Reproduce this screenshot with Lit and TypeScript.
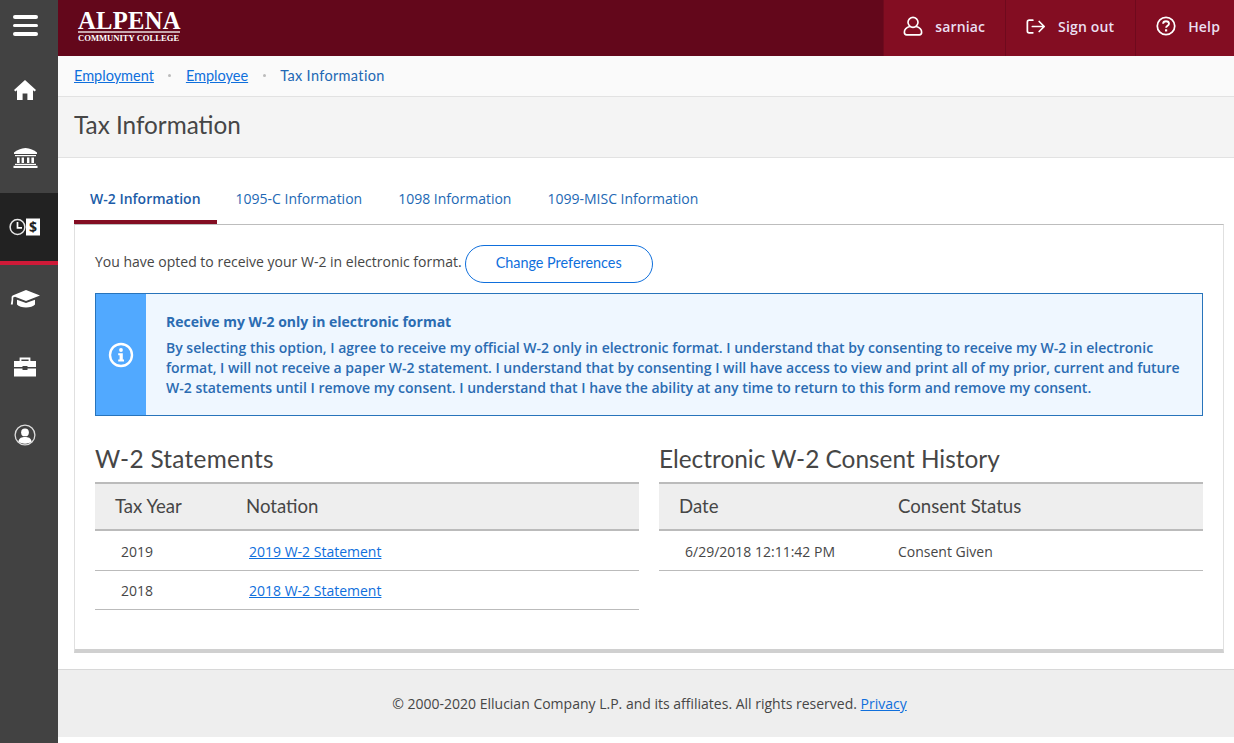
import { LitElement, html, css, svg } from "lit";
import { customElement } from "lit/decorators.js";

const heading = css`"Lato", "Noto Sans", sans-serif`;

const icons = {
  home: svg`<svg viewBox="0 0 22 20" width="22" height="20"><path fill="#fff" d="M11 0 L22 10 L20.6 11.4 L19 10.2 V20 H13.4 V13.5 H8.6 V20 H3 V10.2 L1.4 11.4 L0 10 Z"/></svg>`,
  bank: svg`<svg viewBox="0 0 25 20" width="25" height="20"><path fill="#fff" d="M12.5 0 C17 0.5 21 2 24 4.5 V6 H1 V4.5 C4 2 8 0.5 12.5 0 Z"/><rect fill="#fff" x="2" y="7" width="21" height="1.2"/><path fill="#fff" d="M4 9.5h2.6v5.5H4zM8.6 9.5h2.4v5.5H8.6zM14 9.5h2.4v5.5H14zM18.4 9.5H21v5.5h-2.6z"/><rect fill="#fff" x="2" y="15.8" width="21" height="1.2"/><rect fill="#fff" x="0.5" y="17.8" width="24" height="2.2"/></svg>`,
  pay: svg`<svg viewBox="0 0 32 20" width="32" height="20"><rect fill="#fff" x="17" y="1.5" width="14" height="17"/><circle cx="8.5" cy="10" r="7.4" fill="#222" stroke="#e8e8e8" stroke-width="1.5"/><path d="M8.5 5 V10.8 H13" fill="none" stroke="#fff" stroke-width="1.7"/><text class="dollar" x="24" y="15" text-anchor="middle">$</text></svg>`,
  cap: svg`<svg viewBox="0 0 30 20" width="30" height="20"><path fill="#fff" d="M16 1 L30 6.5 L16 12 L5 7.8 L3.2 8.5 V11 L2.8 15.5 H0.8 L1.6 10.8 V7.8 L2.6 6.6 Z"/><path fill="#fff" d="M7 10.8 L16 14 L25 10.8 V15.5 C22 19.5 10 19.5 7 15.5 Z"/></svg>`,
  case: svg`<svg viewBox="0 0 24 20" width="24" height="20"><path fill="none" stroke="#fff" stroke-width="1.8" d="M7.5 4.5 V1.5 H16.5 V4.5"/><path fill="#fff" d="M1 4 H23 V10 H14.5 V9 H9.5 V10 H1 Z"/><path fill="#fff" d="M1 11.5 H9.5 V13 H14.5 V11.5 H23 V19.5 H1 Z"/></svg>`,
  user: svg`<svg viewBox="0 0 22 22" width="22" height="22"><circle cx="11" cy="11" r="9.9" fill="none" stroke="#ddd" stroke-width="1.3"/><circle cx="11" cy="8.4" r="3.9" fill="#fff"/><path fill="#fff" d="M4.4 17.6 C5 13.8 8 13 11 13 S17 13.8 17.6 17.6 C15 20.4 7 20.4 4.4 17.6 Z"/></svg>`,
  person: svg`<svg viewBox="0 0 22 22" width="20" height="20" fill="none" stroke="#fff" stroke-width="1.8"><circle cx="11" cy="7" r="5.5"/><path d="M7.5 11.5 C3.5 12.5 1.5 15 1.5 18 C1.5 20 2.5 20.8 4 20.8 H18 C19.5 20.8 20.5 20 20.5 18 C20.5 15 18.5 12.5 14.5 11.5"/></svg>`,
  signout: svg`<svg viewBox="0 0 22 18" width="20" height="17" fill="none" stroke="#fff" stroke-width="1.9" stroke-linecap="round" stroke-linejoin="round"><path d="M7.5 2 H3.5 C2.3 2 1.5 2.8 1.5 4 V14 C1.5 15.2 2.3 16 3.5 16 H7.5"/><path d="M7 9 H20 M14.5 3.5 L20 9 L14.5 14.5"/></svg>`,
  help: svg`<svg viewBox="0 0 22 22" width="20" height="20"><circle cx="11" cy="11" r="9.6" fill="none" stroke="#fff" stroke-width="1.9"/><path d="M7.8 8.6 C7.8 6.6 9.4 5.8 11 5.8 C12.8 5.8 14.3 6.8 14.3 8.5 C14.3 10.7 11.1 10.8 11.1 13" fill="none" stroke="#fff" stroke-width="2"/><rect x="9.9" y="14.6" width="2.4" height="2.4" fill="#fff"/></svg>`,
  info: svg`<svg viewBox="0 0 26 26" width="26" height="26"><circle cx="13" cy="13" r="11" fill="none" stroke="#fff" stroke-width="2.4"/><circle cx="13" cy="8" r="1.9" fill="#fff"/><path fill="#fff" d="M10.2 11.2 H14.8 V17.4 H16 V19.4 H10.2 V17.4 H11.6 V13.2 H10.2 Z"/></svg>`,
};

@customElement("app-root")
export class AppRoot extends LitElement {
  static styles = css`
    :host { display: block; font-family: "Open Sans", "Noto Sans", sans-serif; font-size: 14px; color: #464646; background: #fff; }
    * { box-sizing: border-box; }
    a { color: #0f6fdc; }
    .app { display: flex; min-height: 743px; }

    .side { width: 58px; flex: none; background: #424242; display: flex; flex-direction: column; }
    .side-item { display: flex; align-items: center; justify-content: center; height: 68px; padding-right: 8px; }
    .side-item.tall { height: 69px; padding-bottom: 2px; }
    .burger { height: 56px; flex-direction: column; gap: 5px; padding-bottom: 5px; }
    .burger i { display: block; width: 25px; height: 3.5px; border-radius: 2px; background: #fff; }
    .side-item.active { background: #222; height: 72px; border-bottom: 4px solid #cf1a38; }
    .dollar { font: 700 14px "Open Sans", sans-serif; fill: #222; }

    .main { flex: 1; min-width: 0; display: flex; flex-direction: column; }
    .top { height: 56px; background: #63071b; display: flex; align-items: stretch; justify-content: space-between; }
    .logo { padding: 11px 0 0 20px; font-family: "Liberation Serif", serif; color: #fff; font-weight: 700; width: 122px; }
    .logo-main { width: 102px; font-size: 24.6px; line-height: 20px; letter-spacing: 0.3px; border-bottom: 2px solid #c9a8ae; white-space: nowrap; height: 22px; }
    .logo-sub { font-size: 8.6px; line-height: 10px; margin-top: 0; white-space: nowrap; }
    .top-links { display: flex; }
    .top-link { display: flex; align-items: center; gap: 12px; background: #830d22; border-left: 1px solid #6f0a1d; color: #eadff0; font-weight: 600; font-size: 14px; letter-spacing: 0.15px; padding: 0 20px 4px 20px; }
    .top-link svg { display: block; }
    .top-link:nth-child(1) { padding-left: 19px; }
    .top-link:nth-child(2) { padding-right: 21px; }
    .top-link:nth-child(3) { padding-right: 14px; }

    .crumbs { height: 41px; border-bottom: 1px solid #e2e2e2; background: #fafafa; display: flex; align-items: center; padding: 0 16px 2px; font: 400 14.5px ${heading}; }
    .crumbs .sep { width: 3px; height: 3px; border-radius: 50%; background: #bbb; margin: 0 14.5px; }
    .crumbs .cur { color: #2268b4; letter-spacing: 0.35px; }
    .title { height: 61px; background: #f4f4f4; border-bottom: 1px solid #e2e2e2; display: flex; align-items: center; padding: 0 16px 5px; }
    .title h1 { margin: 0; font: 400 24.3px ${heading}; color: #464646; }

    .content { padding: 22px 10px 0 16px; }
    .tabs { display: flex; }
    .tab { height: 44px; padding: 0 16px 3px; display: flex; align-items: center; margin-right: 4px; color: #2268b4; font-size: 14px; white-space: nowrap; border-bottom: 4px solid transparent; }
    .tab.active { color: #1c5ca8; font-weight: 600; border-bottom-color: #830d22; margin-right: 3px; }
    .panel { border: 1px solid #e0e0e0; border-top: 1px solid #bdbdbd; border-bottom: 4px solid #d0d0d0; padding: 20px 20px 39px; height: 429px; }
    .pref { display: flex; align-items: center; }
    .pref span { margin-bottom: 6px; }
    .btn { width: 188px; height: 38px; margin-left: 3px; padding-bottom: 3px; border: 1px solid #0f6fdc; border-radius: 19px; background: #fff; color: #0f6fdc; font: 400 14.4px ${heading}; display: flex; align-items: center; justify-content: center; }
    .alert { display: flex; margin-top: 10px; height: 123px; border: 1px solid #2874bb; background: #eff7ff; color: #2b6cb2; font-weight: 600; }
    .alert-ic { width: 50px; flex: none; background: #51a9ff; display: flex; align-items: center; justify-content: center; }
    .alert-body { padding: 18px 20px 0; line-height: 20px; }
    .alert-body h3 { margin: 0 0 6px; font-size: 14px; font-weight: 700; line-height: 20px; }
    .alert-body p { margin: 0; }

    .cols { display: grid; grid-template-columns: 544px 544px; column-gap: 20px; margin-top: 26px; }
    .cols h2 { margin: 0 0 6px; font: 400 24.4px/34px ${heading}; color: #464646; }
    .statements h2 { letter-spacing: 0.27px; }
    .tbl-head, .tbl-row { display: grid; }
    .statements .tbl-head, .statements .tbl-row { grid-template-columns: 131px 1fr; }
    .history .tbl-head, .history .tbl-row { grid-template-columns: 219px 1fr; }
    .tbl-head { height: 49px; background: #eee; border-top: 2px solid #bbb; border-bottom: 2px solid #bbb; align-items: center; padding-bottom: 2px; font: 400 18.6px ${heading}; }
    .tbl-head span { padding-left: 20px; }
    .tbl-row { height: 39px; border-bottom: 1px solid #bbb; align-items: center; }
    .tbl-head + .tbl-row { height: 40px; padding-top: 1px; }
    .tbl-row span:first-child { padding-left: 26px; }
    .statements .tbl-row span:last-child { padding-left: 23px; }
    .history .tbl-row span:last-child { padding-left: 20px; }

    .foot { height: 68px; margin-top: 16px; background: #eee; border-top: 1px solid #d8d8d8; display: flex; align-items: center; justify-content: center; padding-left: 7px; }
  `;

  render() {
    return html`
      <div class="app">
        <nav class="side">
          <div class="side-item burger"><i></i><i></i><i></i></div>
          <div class="side-item">${icons.home}</div>
          <div class="side-item tall">${icons.bank}</div>
          <div class="side-item active">${icons.pay}</div>
          <div class="side-item">${icons.cap}</div>
          <div class="side-item">${icons.case}</div>
          <div class="side-item">${icons.user}</div>
        </nav>
        <div class="main">
          <header class="top">
            <div class="logo">
              <div class="logo-main">ALPENA</div>
              <div class="logo-sub">COMMUNITY COLLEGE</div>
            </div>
            <div class="top-links">
              <div class="top-link">${icons.person}<span>sarniac</span></div>
              <div class="top-link">${icons.signout}<span>Sign out</span></div>
              <div class="top-link">${icons.help}<span>Help</span></div>
            </div>
          </header>
          <div class="crumbs">
            <a href="#">Employment</a><span class="sep"></span>
            <a href="#">Employee</a><span class="sep"></span>
            <span class="cur">Tax Information</span>
          </div>
          <div class="title"><h1>Tax Information</h1></div>
          <div class="content">
            <div class="tabs">
              <div class="tab active">W-2 Information</div>
              <div class="tab">1095-C Information</div>
              <div class="tab">1098 Information</div>
              <div class="tab">1099-MISC Information</div>
            </div>
            <div class="panel">
              <div class="pref">
                <span>You have opted to receive your W-2 in electronic format.</span>
                <div class="btn">Change Preferences</div>
              </div>
              <div class="alert">
                <div class="alert-ic">${icons.info}</div>
                <div class="alert-body">
                  <h3>Receive my W-2 only in electronic format</h3>
                  <p>By selecting this option, I agree to receive my official W-2 only in electronic format. I understand that by consenting to receive my W-2 in electronic format, I will not receive a paper W-2 statement. I understand that by consenting I will have access to view and print all of my prior, current and future W-2 statements until I remove my consent. I understand that I have the ability at any time to return to this form and remove my consent.</p>
                </div>
              </div>
              <div class="cols">
                <section class="statements">
                  <h2>W-2 Statements</h2>
                  <div class="tbl-head"><span>Tax Year</span><span>Notation</span></div>
                  <div class="tbl-row"><span>2019</span><span><a href="#">2019 W-2 Statement</a></span></div>
                  <div class="tbl-row"><span>2018</span><span><a href="#">2018 W-2 Statement</a></span></div>
                </section>
                <section class="history">
                  <h2>Electronic W-2 Consent History</h2>
                  <div class="tbl-head"><span>Date</span><span>Consent Status</span></div>
                  <div class="tbl-row"><span>6/29/2018 12:11:42 PM</span><span>Consent Given</span></div>
                </section>
              </div>
            </div>
          </div>
          <footer class="foot"><span>© 2000-2020 Ellucian Company L.P. and its affiliates. All rights reserved. <a href="#">Privacy</a></span></footer>
        </div>
      </div>
    `;
  }
}
